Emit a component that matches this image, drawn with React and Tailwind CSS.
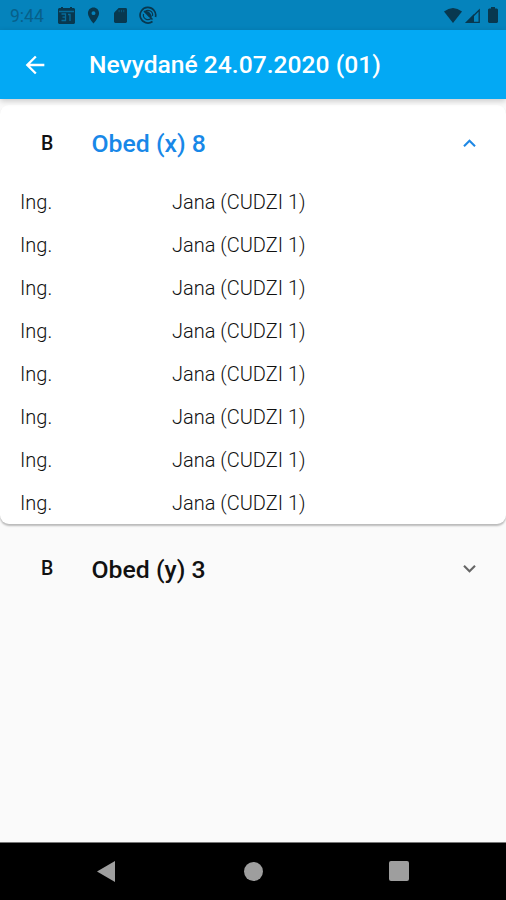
import React, { useState } from "react";
import {
  MdArrowBack,
  MdExpandLess,
  MdExpandMore,
  MdLocationOn,
} from "react-icons/md";

const initialMeals = [
  {
    id: 1,
    type: "B",
    title: "Obed (x) 8",
    people: Array.from({ length: 8 }, (_, i) => ({
      id: i,
      prefix: "Ing.",
      name: "Jana (CUDZI 1)",
    })),
  },
  { id: 2, type: "B", title: "Obed (y) 3", people: [] },
];

function StatusBar() {
  return (
    <div className="h-[30px] shrink-0 bg-[#0583bc] text-[#08384f] flex items-center pl-[10px] pr-[8px]">
      <span className="w-[48px] text-[17.5px] leading-[30px] pt-px text-[#07608a]">9:44</span>
      <svg className="w-[17px] h-[17px]" viewBox="0 0 17 17">
        <path fill="currentColor" d="M1 1h2V0h2v1h7V0h2v1h2l1 1v14l-1 1H1l-1-1V2z" />
        <path
          fill="none"
          stroke="#0583bc"
          strokeWidth="1.3"
          opacity=".7"
          d="M1 4.500h15M3.500 7h4v6.500H3.500M4.500 10.200h3M10 7.500h2v6.500"
        />
      </svg>
      <MdLocationOn className="ml-[9px] w-[19px] h-[19px]" />
      <svg className="ml-[11px] w-[13px] h-[15px]" viewBox="0 0 14 16">
        <path fill="currentColor" d="M5 0h7.500Q14 0 14 1.500v13q0 1.500-1.500 1.500h-11Q0 16 0 14.500V5z" />
        <path stroke="#0583bc" strokeWidth="1" d="M5.500 2v2.500M8 2v2.500M10.500 2v2.500" opacity=".5" />
      </svg>
      <svg className="ml-[12px] w-[18px] h-[18px]" viewBox="0 0 18 18" fill="none" stroke="currentColor">
        <path strokeWidth="1.700" d="M13.500 15.500A7.800 7.800 0 1 1 16.500 11" />
        <path strokeWidth="1.200" d="M12 12.500A4.600 4.600 0 0 1 4.500 8M6 5.500A4.600 4.600 0 0 1 13.500 10" />
        <path fill="currentColor" stroke="none" d="M5 5.500Q11 3 13 11.500L9.500 10.500 7.500 8z" />
        <path strokeWidth="1.500" d="M5 5l8.500 8.500" />
      </svg>
      <div className="ml-auto flex items-center">
        <svg className="w-[18px] h-[15px]" viewBox="0 0 18 15">
          <path fill="currentColor" d="M9 15L0 3.500Q9-3.500 18 3.500z" />
        </svg>
        <svg className="ml-[3px] w-[15px] h-[15px]" viewBox="0 0 15 15">
          <path fill="currentColor" d="M0 15L9 6v9z" />
          <path fill="none" stroke="currentColor" strokeWidth="1.300" d="M2 14.300L14.200 2v12.300z" />
        </svg>
        <svg className="ml-[8px] w-[10px] h-[16px]" viewBox="0 0 10 16">
          <path fill="currentColor" d="M3 0h4v1.500h2l1 1V15l-1 1H1l-1-1V2.500l1-1h2z" />
        </svg>
      </div>
    </div>
  );
}

function MealHeader({ meal, open, onToggle }) {
  return (
    <button
      onClick={onToggle}
      className="w-full h-[77px] flex items-center pl-[41px] pr-[24px] text-left"
    >
      <span className="w-[50.500px] text-[19.5px] font-medium text-[#111]">{meal.type}</span>
      <span
        className={
          open
            ? "flex-1 pt-px text-[24.8px] font-medium text-[#1888e8]"
            : "flex-1 pt-[2px] text-[24.8px] font-medium text-[#111]"
        }
      >
        {meal.title}
      </span>
      {open ? (
        <MdExpandLess className="w-[25px] h-[25px] text-[#1e88e5]" />
      ) : (
        <MdExpandMore className="w-[25px] h-[25px] text-[#666]" />
      )}
    </button>
  );
}

export default function App() {
  const [openId, setOpenId] = useState(1);

  const handleToggle = (id) => {
    setOpenId(openId === id ? null : id);
  };

  return (
    <div className="w-full h-[900px] flex flex-col overflow-hidden bg-[#fafafa] font-['Roboto',sans-serif]">
      <StatusBar />

      <header className="relative z-10 h-[69px] shrink-0 bg-[#03a9f4] text-white flex items-center pl-[21px] shadow-[0_2px_6px_rgba(0,0,0,0.2)]">
        <MdArrowBack className="w-[28px] h-[28px]" />
        <h1 className="ml-[40px] pt-[2px] text-[24.65px] font-medium">Nevydané 24.07.2020 (01)</h1>
      </header>

      <main className="flex-1 pt-[6px]">
        {initialMeals.map((meal) =>
          meal.id === openId ? (
            <section
              key={meal.id}
              className="h-[419px] mb-[6px] bg-white rounded-[9px] shadow-[0_2px_2px_rgba(0,0,0,0.26)]"
            >
              <MealHeader meal={meal} open onToggle={() => handleToggle(meal.id)} />
              <ul className="-mt-[2px]">
                {meal.people.map((person) => (
                  <li
                    key={person.id}
                    className="h-[43.1px] flex items-center pl-[20px] text-[20px] font-light text-[#111]"
                  >
                    <span className="w-[152px]">{person.prefix}</span>
                    <span>{person.name}</span>
                  </li>
                ))}
              </ul>
            </section>
          ) : (
            <MealHeader key={meal.id} meal={meal} onToggle={() => handleToggle(meal.id)} />
          )
        )}
      </main>

      <nav className="h-[58px] shrink-0 bg-black border-t border-[#777] flex items-center pl-[97px] pb-px text-[#9e9e9e]">
        <svg className="w-[18px] h-[21px]" viewBox="0 0 18 21">
          <path fill="currentColor" d="M18 0v21L0 10.500z" />
        </svg>
        <span className="ml-[129px] w-[19px] h-[19px] rounded-full bg-[#9e9e9e]" />
        <span className="ml-[126px] w-[20px] h-[20px] rounded-[2px] bg-[#9e9e9e]" />
      </nav>
    </div>
  );
}
